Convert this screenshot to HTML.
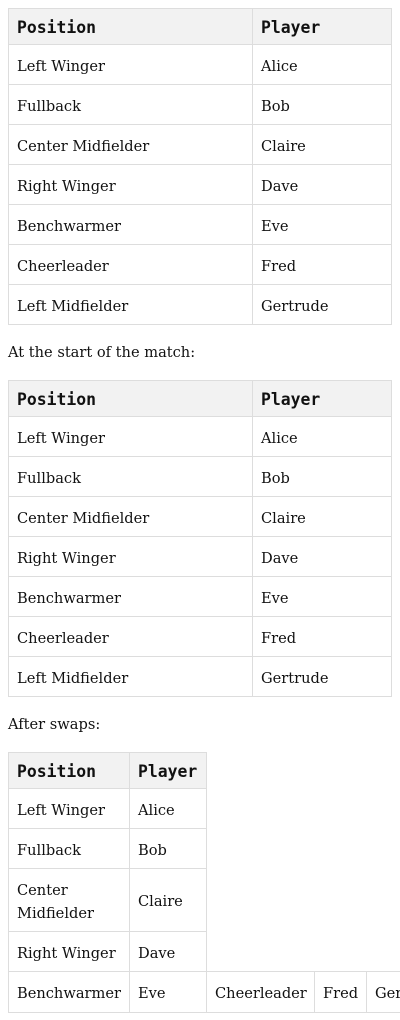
<!DOCTYPE html>
<html><head><style>
html,body{margin:0;width:400px;height:1020px;overflow:hidden}
body{background:#fff;position:relative;font-family:"DejaVu Serif","Liberation Serif",serif;font-size:14.6px;color:#111}
.c{position:absolute;box-sizing:border-box;border:1px solid #ddd;display:flex;align-items:center;padding-left:8px;padding-top:3px;line-height:23px;white-space:nowrap;overflow:hidden}
.h{background:#f2f2f2;font-family:"DejaVu Sans Mono","Liberation Mono",monospace;font-weight:bold;font-size:16.4px;padding-top:1px}
.t{position:absolute;left:8px}
</style></head><body>
<div id="a" style="position:absolute;left:0;top:0;width:400px;height:1020px;overflow:hidden"></div>
<script>
function tbl(top,rows,cols,heights,hdr){
 let h='';let y=top;
 rows.forEach((r,i)=>{
  r.forEach((txt,j)=>{
   let w=(cols[j+1]||cols[j]+100)-cols[j];
   h+=`<div class="c${(i==0&&hdr)?' h':''}" style="left:${cols[j]}px;top:${y}px;width:${w+1}px;height:${heights[i]+1}px;white-space:${txt.includes('<br>')?'normal':'nowrap'}">${txt}</div>`;
  });
  y+=heights[i];
 });
 return h;
}
const R=[["Position","Player"],["Left Winger","Alice"],["Fullback","Bob"],["Center Midfielder","Claire"],["Right Winger","Dave"],["Benchwarmer","Eve"],["Cheerleader","Fred"],["Left Midfielder","Gertrude"]];
const H=[36,40,40,40,40,40,40,40];
let s=tbl(8,R,[8,252,391],H,1)+tbl(380,R,[8,252,391],H,1);
s+='<div class="t" style="top:344px">At the start of the match:</div><div class="t" style="top:716px">After swaps:</div>';
const R3=[["Position","Player"],["Left Winger","Alice"],["Fullback","Bob"],["Center<br>Midfielder","Claire"],["Right Winger","Dave"]];
s+=tbl(752,R3,[8,129,206],[36,40,40,63,40],1);
s+=tbl(971,[["Benchwarmer","Eve","Cheerleader","Fred","Gertrude"]],[8,129,206,314,366,460],[41],0);
document.getElementById('a').innerHTML=s;
</script>
</body></html>
